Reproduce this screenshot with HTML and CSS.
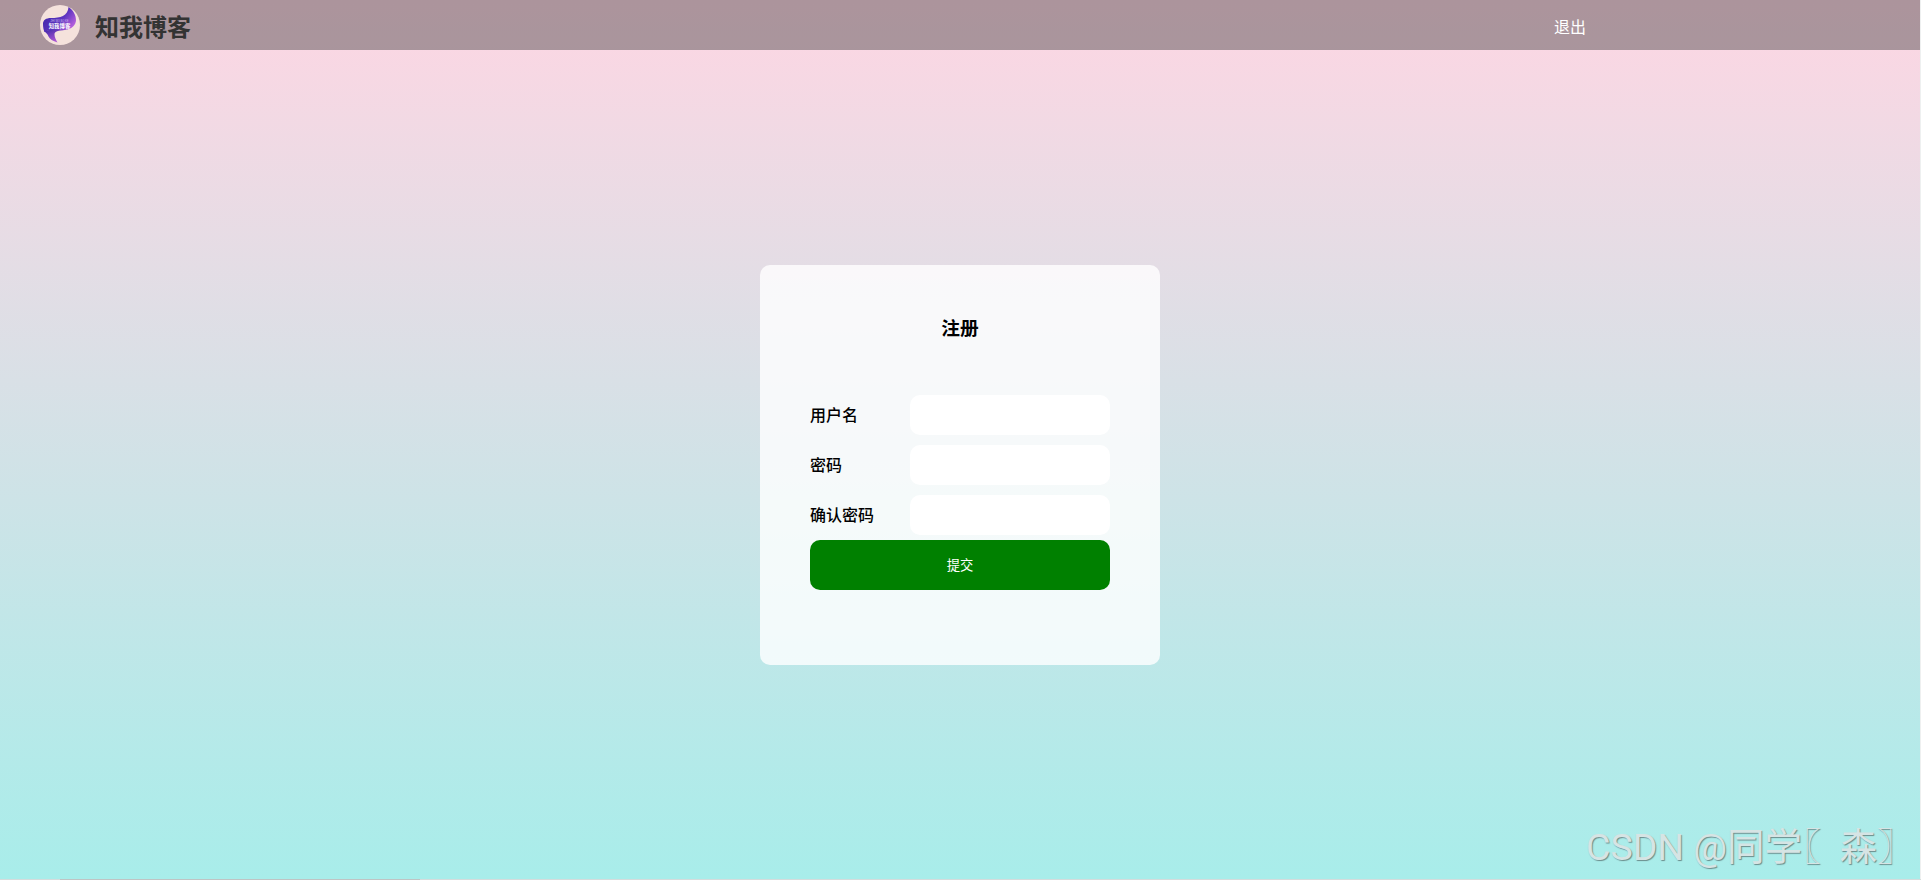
FILE: index.html
```
<!DOCTYPE html>
<html lang="zh-CN">
<head>
    <meta charset="UTF-8">
    <title>注册页面</title>
    <link rel="stylesheet" href="styles.css">
</head>
<body>
    <div class="page">
        <!-- 导航栏 -->
        <div class="nav">
            <svg class="logo" viewBox="0 0 40 40">
                <defs>
                    <linearGradient id="ribbon" x1="0" y1="0" x2="1" y2="0.6">
                        <stop offset="0.3" stop-color="#4a2cb0"/>
                        <stop offset="0.65" stop-color="#5f35c0"/>
                        <stop offset="1" stop-color="#b45fdc"/>
                    </linearGradient>
                    <linearGradient id="tail" x1="0" y1="0" x2="0.6" y2="1">
                        <stop offset="0" stop-color="#3f28a8"/>
                        <stop offset="1" stop-color="#b75bd8"/>
                    </linearGradient>
                </defs>
                <circle cx="20" cy="20" r="20" fill="#f5e2dc"/>
                <path d="M3 19C3 15 6 13 11 13C20 13 28 11 28.500 2C33 5 36 10 36 15C36 20 32 24 25 25C18 26 10 24 4.500 27C3.500 25 3 22 3 19Z" fill="url(#ribbon)"/>
                <path d="M4 26.500C9 23.500 18 25 24 25C17 25.500 14.500 27 14.500 29.500C14.500 32 16 35 17.500 37.500C13 36 9.500 34 8.500 31.500C7.500 29 6 27.500 4 26.500Z" fill="url(#tail)"/>
                <text class="logo-sub" x="19.500" y="16.500">ZHI WO BO KE</text>
                <text class="logo-text" x="19.500" y="23.300">知我博客</text>
            </svg>
            <span class="title">知我博客</span>
            <a class="logout" href="#">退出</a>
        </div>
        <!-- 注册框 -->
        <div class="container">
            <form class="dialog">
                <h3>注册</h3>
                <div class="row">
                    <label for="username">用户名</label>
                    <input type="text" id="username">
                </div>
                <div class="row">
                    <label for="password">密码</label>
                    <input type="password" id="password">
                </div>
                <div class="row">
                    <label for="password2">确认密码</label>
                    <input type="password" id="password2">
                </div>
                <button type="button" class="submit">提交</button>
            </form>
        </div>
    </div>
    <div class="bottom-bar"><div class="thumb"></div></div>
    <div class="watermark">CSDN @同学<span class="bracket">〖</span>森〗</div>
</body>
</html>
```
FILE: styles.css
```
* {
    margin: 0;
    padding: 0;
    box-sizing: border-box;
}
body {
    height: 880px;
    overflow: hidden;
    background-color: #eef0f0;
    font-family: "Liberation Sans", "Noto Sans CJK SC", sans-serif;
}
.page {
    width: 1920px;
    height: 879px;
    display: flex;
    flex-direction: column;
    background-image: linear-gradient(to bottom, #fed6e3, #a8edea);
}
.nav {
    height: 50px;
    padding-left: 40px;
    display: flex;
    align-items: center;
    background-color: rgba(51, 51, 51, 0.4);
}
.logo {
    width: 40px;
    height: 40px;
}
.logo-text {
    font-size: 5.4px;
    font-weight: bold;
    fill: #fff;
    text-anchor: middle;
}
.logo-sub {
    font-size: 2.6px;
    fill: #cdbdf0;
    text-anchor: middle;
}
.title {
    margin-left: 15px;
    font-size: 24px;
    font-weight: bold;
    color: #333;
}
.logout {
    margin-left: auto;
    margin-right: 334px;
    padding-top: 1px;
    color: #fff;
    text-decoration: none;
}
.container {
    flex: 1;
    display: flex;
    justify-content: center;
    align-items: center;
    padding-top: 1px;
}
.dialog {
    width: 400px;
    height: 400px;
    padding: 0 50px;
    border-radius: 10px;
    background-color: rgba(255, 255, 255, 0.8);
}
.dialog h3 {
    padding: 51px 0 49px;
    font-size: 18.72px;
    line-height: 25px;
    text-align: center;
}
.row {
    height: 50px;
    display: flex;
    align-items: center;
}
.row label {
    width: 100px;
    padding-bottom: 2px;
    font-weight: 500;
}
.row input {
    width: 200px;
    height: 40px;
    padding-left: 10px;
    border: none;
    outline: none;
    border-radius: 10px;
    background-color: #fff;
}
.submit {
    display: block;
    width: 300px;
    height: 50px;
    padding-bottom: 2px;
    border: none;
    border-radius: 10px;
    background-color: green;
    color: #fff;
    font-family: inherit;
    font-size: 13.33px;
}
.bottom-bar {
    height: 1px;
    padding-left: 60px;
    background-color: #d5dcdc;
}
.thumb {
    width: 360px;
    height: 1px;
    background-color: #bfc4c4;
}
.watermark {
    position: absolute;
    left: 1586px;
    bottom: 8px;
    font-family: Roboto, "Noto Sans CJK SC", sans-serif;
    font-size: 37.5px;
    line-height: 50px;
    white-space: nowrap;
    color: #d6e4e4;
    text-shadow: 1px 1px 1px rgba(80, 100, 100, 0.7);
}
.bracket {
    padding-right: 0.5em;
    font-feature-settings: "halt";
}
```
